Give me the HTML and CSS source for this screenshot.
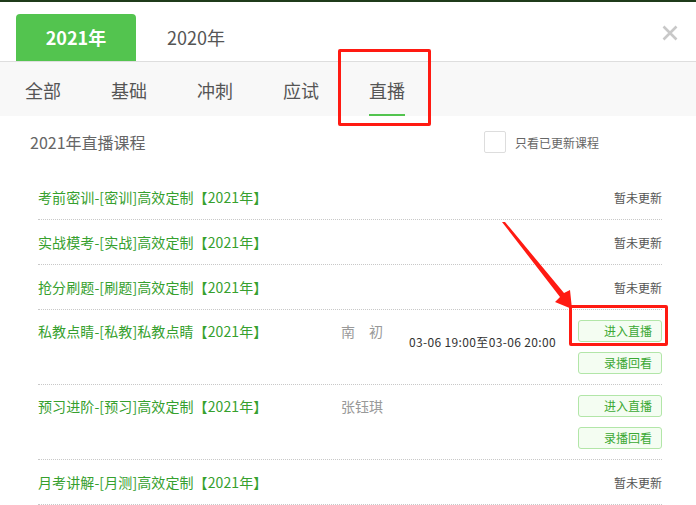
FILE: index.html
```html
<!DOCTYPE html>
<html lang="zh">
<head>
<meta charset="utf-8">
<link rel="stylesheet" href="styles.css">
</head>
<body>
<div class="page">
  <div class="topbar"></div>
  <div class="years">
    <div class="year active">2021年</div>
    <div class="year">2020年</div>
    <svg class="close" width="16" height="16" viewBox="0 0 16 16"><path d="M1.5 1.5 L14.5 14.5 M14.5 1.5 L1.5 14.5" stroke="#c8c8c8" stroke-width="2.6" fill="none"/></svg>
  </div>
  <div class="tabs">
    <div class="tab"><span class="tab-text">全部</span></div>
    <div class="tab"><span class="tab-text">基础</span></div>
    <div class="tab"><span class="tab-text">冲刺</span></div>
    <div class="tab"><span class="tab-text">应试</span></div>
    <div class="tab current"><span class="tab-text">直播</span><span class="tab-line"></span></div>
  </div>
  <div class="head">
    <div class="head-title">2021年直播课程</div>
    <label class="filter"><span class="check"></span><span>只看已更新课程</span></label>
  </div>
  <div class="list">
    <div class="row">
      <div class="name">考前密训-[密训]高效定制【2021年】</div>
      <div class="status">暂未更新</div>
    </div>
    <div class="row">
      <div class="name">实战模考-[实战]高效定制【2021年】</div>
      <div class="status">暂未更新</div>
    </div>
    <div class="row">
      <div class="name">抢分刷题-[刷题]高效定制【2021年】</div>
      <div class="status">暂未更新</div>
    </div>
    <div class="row tall">
      <div class="name">私教点睛-[私教]私教点睛【2021年】</div>
      <div class="teacher">南　初</div>
      <div class="time">03-06 19:00至03-06 20:00</div>
      <div class="btns"><span class="btn">进入直播</span><span class="btn">录播回看</span></div>
    </div>
    <div class="row tall">
      <div class="name">预习进阶-[预习]高效定制【2021年】</div>
      <div class="teacher">张钰琪</div>
      <div class="time"></div>
      <div class="btns"><span class="btn">进入直播</span><span class="btn">录播回看</span></div>
    </div>
    <div class="row">
      <div class="name">月考讲解-[月测]高效定制【2021年】</div>
      <div class="status">暂未更新</div>
    </div>
  </div>
  <div class="mark mark-tab"></div>
  <div class="mark mark-btn"></div>
  <svg class="arrow" width="696" height="505" viewBox="0 0 696 505"><polygon points="502,222 505,222 564,293 570,290 572,309 555,302 560,297" fill="#ff1a12"/></svg>
</div>
</body>
</html>
```

FILE: styles.css
```css
* { box-sizing: border-box; }
html, body { margin: 0; padding: 0; background: #fff; }
body {
  font-family: "Noto Sans CJK SC", "Microsoft YaHei", "Liberation Sans", sans-serif;
  color: #666;
}
.page { position: relative; width: 696px; height: 505px; overflow: hidden; }
.topbar { height: 2px; background: #1f3b1a; }

.years {
  position: relative;
  height: 59px;
  display: flex;
  align-items: flex-end;
  padding-left: 16px;
}
.year {
  width: 120px;
  height: 47px;
  line-height: 47px;
  text-align: center;
  font-size: 18px;
  color: #555;
  border-radius: 4px 4px 0 0;
}
.year.active { background: #53c44f; color: #fff; font-weight: bold; }
.close { position: absolute; right: 18px; top: 23px; }

.tabs {
  height: 55px;
  border-top: 1px solid #dedede;
  background: #f8f8f8;
  display: flex;
}
.tab {
  width: 86px;
  display: flex;
  flex-direction: column;
  align-items: center;
  padding-top: 16px;
}
.tab-text { font-size: 18px; line-height: 24px; color: #555; }
.tab-line { display: block; width: 36px; height: 4px; margin-top: 12px; background: #53c44f; }

.head {
  display: flex;
  align-items: center;
  height: 22px;
  margin: 15px 0 0 30px;
}
.head-title { font-size: 16px; color: #666; width: 454px; }
.filter { display: flex; align-items: center; font-size: 12px; color: #666; }
.check {
  width: 22px; height: 22px;
  border: 1px solid #ddd;
  border-radius: 2px;
  margin-right: 9px;
  background: #fff;
}

.list { width: 624px; margin: 22px 0 0 38px; }
.row {
  display: flex;
  align-items: center;
  height: 45px;
  border-bottom: 1px dotted #c8c8c8;
}
.row.tall { height: 75px; align-items: flex-start; padding-top: 10px; }
.name { width: 303px; font-size: 14px; line-height: 22px; color: #36a02e; letter-spacing: 0.1px; }
.status { margin-left: auto; font-size: 12px; color: #555; }
.teacher { width: 68px; font-size: 14px; line-height: 22px; color: #999; }
.time { font-size: 12px; line-height: 22px; color: #333; margin-top: 11px; letter-spacing: 0.35px; }
.btns { margin-left: auto; display: flex; flex-direction: column; gap: 10px; }
.btn {
  display: block;
  width: 84px;
  height: 22px;
  line-height: 20px;
  border: 1px solid #b2e6a8;
  border-radius: 3px;
  background: #f4fdf2;
  color: #3aa833;
  font-size: 12px;
  text-align: right;
  padding-right: 9px;
}

.mark { position: absolute; border: 3px solid #ff1a12; border-radius: 2px; }
.mark-tab { left: 338px; top: 49px; width: 93px; height: 77px; }
.mark-btn { left: 569px; top: 305px; width: 99px; height: 41px; }
.arrow { position: absolute; left: 0; top: 0; pointer-events: none; }
```
